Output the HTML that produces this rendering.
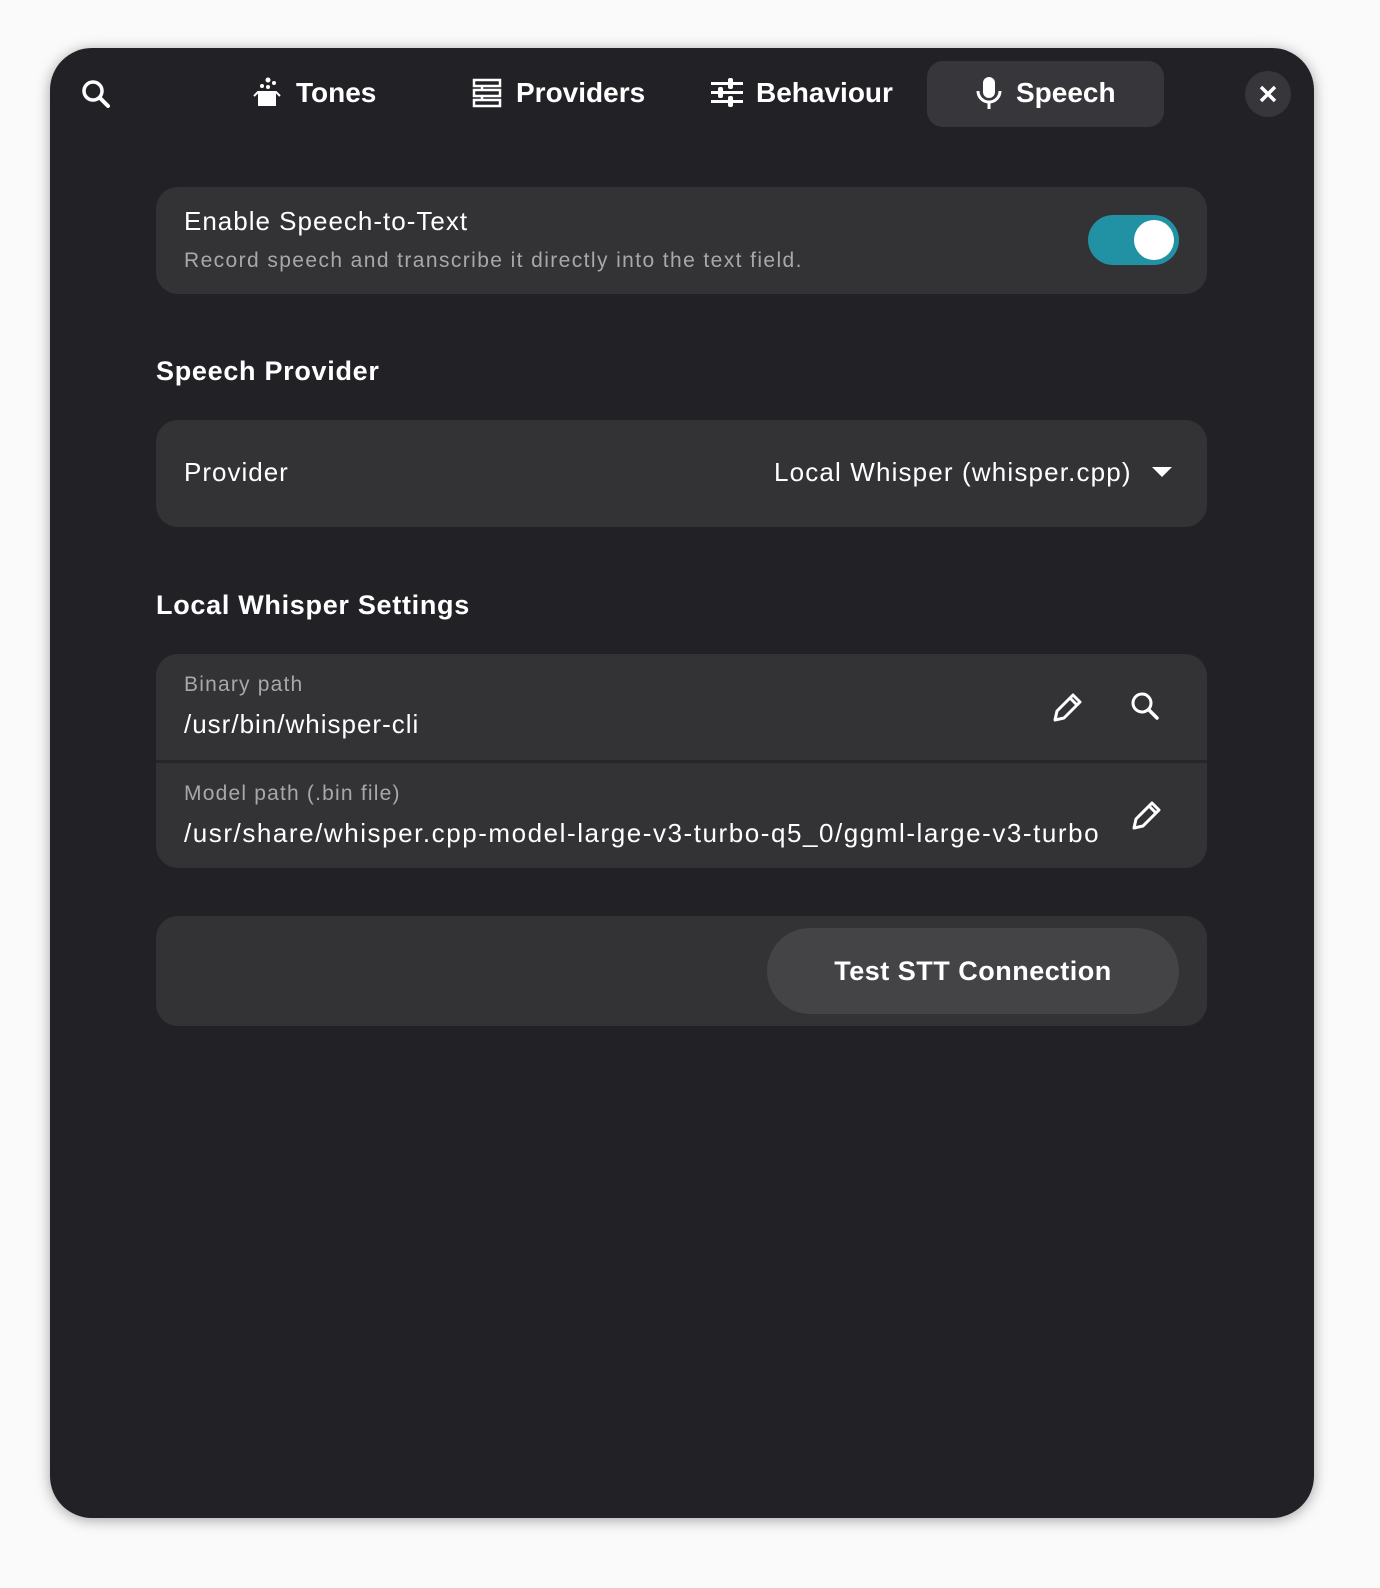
<!DOCTYPE html>
<html><head><meta charset="utf-8"><style>
*{box-sizing:border-box;margin:0;padding:0}
body{width:1380px;height:1588px;background:#fafafa;font-family:"Liberation Sans",sans-serif;position:relative;overflow:hidden}
.win{position:absolute;left:50px;top:48px;width:1264px;height:1470px;background:#222226;border-radius:42px;box-shadow:0 2px 14px rgba(0,0,0,.35)}
.t{position:absolute;color:#fff;font-weight:bold;font-size:28px;top:28px;line-height:34px;display:flex;align-items:center;gap:12px}
.card{position:absolute;left:106px;width:1051px;background:#333336;border-radius:22px}
.w{color:#fff;position:absolute;letter-spacing:1px;white-space:nowrap}
.g{color:#a8a8ab;position:absolute;letter-spacing:1.2px;white-space:nowrap}
h2{position:absolute;color:#fff;font-size:27px;font-weight:bold;left:106px;letter-spacing:.7px}
</style></head><body>
<div class="win">
<svg style="position:absolute;left:30px;top:30px" width="32" height="32" viewBox="0 0 32 32"><circle cx="13" cy="13" r="9" fill="none" stroke="#fff" stroke-width="3.5"/><path d="M20 20l8 8" stroke="#fff" stroke-width="4" stroke-linecap="round"/></svg>
<div class="t" style="left:202px"><svg width="32" height="32" viewBox="0 0 32 32" fill="#fff"><rect x="6" y="15" width="18" height="14"/><path d="M2 19l4-4h18l4 4" fill="none" stroke="#fff" stroke-width="2"/><circle cx="16" cy="3" r="2.5"/><circle cx="10" cy="9" r="2"/><circle cx="16" cy="10" r="2"/><circle cx="22" cy="6" r="2"/></svg>Tones</div>
<div class="t" style="left:422px"><svg width="32" height="32" viewBox="0 0 32 32" fill="none" stroke="#fff" stroke-width="2.5"><rect x="2" y="3" width="26" height="6"/><rect x="2" y="13" width="26" height="6"/><rect x="2" y="23" width="26" height="6"/><path d="M10 9v4M10 19v4" /></svg>Providers</div>
<div class="t" style="left:660px"><svg width="34" height="34" viewBox="0 0 34 34" fill="#fff"><rect x="1" y="6" width="32" height="3"/><rect x="1" y="15" width="32" height="3"/><rect x="1" y="24" width="32" height="3"/><rect x="18" y="2" width="5" height="11" rx="2"/><rect x="8" y="11" width="5" height="11" rx="2"/><rect x="18" y="20" width="5" height="11" rx="2"/></svg>Behaviour</div>
<div style="position:absolute;left:877px;top:13px;width:237px;height:66px;background:#37373b;border-radius:16px"></div>
<div class="t" style="left:924px"><svg width="30" height="34" viewBox="0 0 30 34"><rect x="9" y="1" width="12" height="21" rx="6" fill="#fff"/><path d="M4 15a11 11 0 0 0 22 0M15 26v7" fill="none" stroke="#fff" stroke-width="3"/></svg>Speech</div>
<div style="position:absolute;left:1195px;top:23px;width:46px;height:46px;border-radius:50%;background:#37373b"></div>
<svg style="position:absolute;left:1208px;top:36px" width="20" height="20" viewBox="0 0 20 20"><path d="M3 3l14 14M17 3L3 17" stroke="#fff" stroke-width="3.5"/></svg>

<div class="card" style="top:139px;height:107px">
<div class="w" style="left:28px;top:19px;font-size:26px">Enable Speech-to-Text</div>
<div class="g" style="left:28px;top:62px;font-size:21px;letter-spacing:1.4px">Record speech and transcribe it directly into the text field.</div>
<div style="position:absolute;left:932px;top:28px;width:91px;height:50px;border-radius:25px;background:#2191a4"></div>
<div style="position:absolute;left:978px;top:33px;width:40px;height:40px;border-radius:50%;background:#fff"></div>
</div>
<h2 style="top:308px">Speech Provider</h2>
<div class="card" style="top:372px;height:107px">
<div class="w" style="left:28px;top:37px;font-size:26px">Provider</div>
<div class="w" style="left:618px;top:37px;font-size:26px;letter-spacing:1.15px">Local Whisper (whisper.cpp)</div>
<svg style="position:absolute;left:996px;top:47px" width="20" height="12"><path d="M0 0h20L10 10z" fill="#fff"/></svg>
</div>
<h2 style="top:542px">Local Whisper Settings</h2>
<div class="card" style="top:606px;height:214px">
<div style="position:absolute;left:0;top:106px;width:100%;height:3px;background:#262629"></div>
<div class="g" style="left:28px;top:19px;font-size:21px">Binary path</div>
<div class="w" style="left:28px;top:55px;font-size:26px">/usr/bin/whisper-cli</div>
<div class="g" style="left:28px;top:128px;font-size:21px">Model path (.bin file)</div>
<div class="w" style="left:28px;top:164px;font-size:26px;letter-spacing:1.55px">/usr/share/whisper.cpp-model-large-v3-turbo-q5_0/ggml-large-v3-turbo</div>
<svg style="position:absolute;left:893px;top:36px" width="36" height="36" viewBox="0 0 36 36"><path d="M6 30l2-9L24 5l7 7-16 16zM21 8l7 7" fill="none" stroke="#fff" stroke-width="3" stroke-linejoin="round"/></svg>
<svg style="position:absolute;left:973px;top:36px" width="32" height="32" viewBox="0 0 32 32"><circle cx="13" cy="13" r="9" fill="none" stroke="#fff" stroke-width="3"/><path d="M20 20l8 8" stroke="#fff" stroke-width="3.5" stroke-linecap="round"/></svg>
<svg style="position:absolute;left:972px;top:144px" width="36" height="36" viewBox="0 0 36 36"><path d="M6 30l2-9L24 5l7 7-16 16zM21 8l7 7" fill="none" stroke="#fff" stroke-width="3" stroke-linejoin="round"/></svg>
</div>
<div class="card" style="top:868px;height:110px">
<div style="position:absolute;left:611px;top:12px;width:412px;height:86px;border-radius:43px;background:#444447;color:#fff;font-weight:bold;font-size:27px;text-align:center;line-height:86px;letter-spacing:.5px">Test STT Connection</div>
</div>
</div>
</body></html>
